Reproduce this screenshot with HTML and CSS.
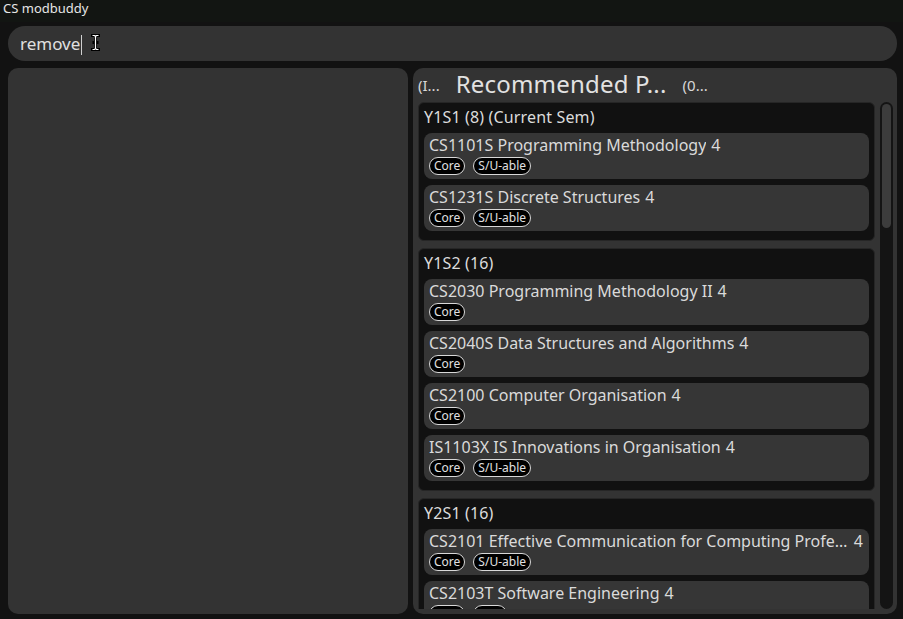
FILE: index.html
```html
<!DOCTYPE html>
<html>
<head>
<meta charset="utf-8">
<link rel="stylesheet" href="styles.css">
</head>
<body>
<div class="titlebar">CS modbuddy</div>
<div class="app">
  <div class="search">
    <span class="search-text">remove</span><span class="caret"></span>
    <svg class="ibeam" width="9" height="17" viewBox="0 0 9 17">
      <path d="M1.5 1.5h2l1 1 1-1h2M4.5 2.5v12M1.5 15.5h2l1-1 1 1h2M3 8.5h3" fill="none" stroke="#000" stroke-width="3" stroke-linecap="square"/>
      <path d="M1.5 1.5h2l1 1 1-1h2M4.5 2.5v12M1.5 15.5h2l1-1 1 1h2" fill="none" stroke="#fff" stroke-width="1.2"/>
    </svg>
  </div>
  <div class="main">
    <div class="left"></div>
    <div class="right">
      <div class="header">
        <span class="hsmall">(I...</span>
        <span class="htitle">Recommended P...</span>
        <span class="hsmall">(0...</span>
      </div>
      <div class="content">
        <div class="list">
          <div class="group">
            <div class="gtitle">Y1S1 (8) (Current Sem)</div>
            <div class="card">
              <div class="ctitle"><span class="cname">CS1101S Programming Methodology</span><span class="ccred">4</span></div>
              <div class="tags"><span class="tag">Core</span><span class="tag">S/U-able</span></div>
            </div>
            <div class="card">
              <div class="ctitle"><span class="cname">CS1231S Discrete Structures</span><span class="ccred">4</span></div>
              <div class="tags"><span class="tag">Core</span><span class="tag">S/U-able</span></div>
            </div>
          </div>
          <div class="group">
            <div class="gtitle">Y1S2 (16)</div>
            <div class="card">
              <div class="ctitle"><span class="cname">CS2030 Programming Methodology II</span><span class="ccred">4</span></div>
              <div class="tags"><span class="tag">Core</span></div>
            </div>
            <div class="card">
              <div class="ctitle"><span class="cname">CS2040S Data Structures and Algorithms</span><span class="ccred">4</span></div>
              <div class="tags"><span class="tag">Core</span></div>
            </div>
            <div class="card">
              <div class="ctitle"><span class="cname">CS2100 Computer Organisation</span><span class="ccred">4</span></div>
              <div class="tags"><span class="tag">Core</span></div>
            </div>
            <div class="card">
              <div class="ctitle"><span class="cname">IS1103X IS Innovations in Organisation</span><span class="ccred">4</span></div>
              <div class="tags"><span class="tag">Core</span><span class="tag">S/U-able</span></div>
            </div>
          </div>
          <div class="group">
            <div class="gtitle">Y2S1 (16)</div>
            <div class="card">
              <div class="ctitle"><span class="cname">CS2101 Effective Communication for Computing Professionals</span><span class="ccred">4</span></div>
              <div class="tags"><span class="tag">Core</span><span class="tag">S/U-able</span></div>
            </div>
            <div class="card">
              <div class="ctitle"><span class="cname">CS2103T Software Engineering</span><span class="ccred">4</span></div>
              <div class="tags"><span class="tag">Core</span><span class="tag">SDG</span></div>
            </div>
            <div class="card">
              <div class="ctitle"><span class="cname">CS2106 Introduction to Operating Systems</span><span class="ccred">4</span></div>
              <div class="tags"><span class="tag">Core</span></div>
            </div>
          </div>
        </div>
        <div class="scrollbar"><div class="thumb"></div></div>
      </div>
    </div>
  </div>
</div>
</body>
</html>
```

FILE: styles.css
```css
* { box-sizing: border-box; }
html, body {
  margin: 0;
  padding: 0;
  height: 619px;
  overflow: hidden;
}
body {
  background: #121212;
  color: #d8d8d8;
  font-family: "Noto Sans", "Open Sans", sans-serif;
}
.titlebar {
  height: 22px;
  line-height: 17px;
  padding-left: 3px;
  font-size: 13px;
  color: #e6e6e6;
  background: #121512;
}
.app {
  padding: 4px 6px 0 8px;
}
.search {
  height: 35px;
  border-radius: 17px;
  background: #333333;
  display: flex;
  align-items: center;
  padding-left: 12px;
}
.search-text {
  font-size: 17px;
  color: #e0e0e0;
  line-height: 20px;
  margin-top: 1px;
}
.caret {
  width: 1px;
  height: 20px;
  background: #d0d0d0;
  margin-left: 1px;
  margin-top: 2px;
}
.ibeam {
  margin-left: 9px;
  margin-top: -3px;
}
.main {
  display: flex;
  gap: 5px;
  margin-top: 7px;
  height: 546px;
}
.left {
  width: 400px;
  background: #333333;
  border-radius: 10px;
}
.right {
  flex: 1;
  background: #333333;
  border-radius: 10px;
  padding: 4px 4px 5px 5px;
  display: flex;
  flex-direction: column;
}
.header {
  height: 30px;
  display: flex;
  align-items: center;
  gap: 16px;
  padding-bottom: 7px;
  white-space: nowrap;
}
.hsmall {
  font-size: 15px;
  color: #d8d8d8;
  margin-top: 2px;
}
.htitle {
  font-size: 24px;
  color: #e2e2e2;
  letter-spacing: 0.2px;
}
.content {
  flex: 1;
  display: flex;
  gap: 5px;
  min-height: 0;
}
.list {
  width: 457px;
  overflow: hidden;
  display: flex;
  flex-direction: column;
  gap: 7px;
}
.group {
  background: #111111;
  border: 1px solid #262626;
  border-radius: 6px;
  padding: 2px 5px 9px 5px;
  display: flex;
  flex-direction: column;
  gap: 6px;
  flex-shrink: 0;
}
.gtitle {
  font-size: 16px;
  line-height: 24px;
  height: 24px;
  margin-bottom: -2px;
  color: #dcdcdc;
  letter-spacing: 0.15px;
}
.card {
  background: #363636;
  border-radius: 8px;
  padding: 1px 6px 4px 5px;
  height: 46px;
  flex-shrink: 0;
}
.ctitle {
  display: flex;
  font-size: 16px;
  line-height: 22px;
  height: 22px;
  color: #dadada;
  white-space: nowrap;
}
.cname {
  overflow: hidden;
  text-overflow: ellipsis;
  min-width: 0;
}
.ccred {
  flex-shrink: 0;
  margin-left: 5px;
}
.tags {
  display: flex;
  gap: 8px;
  margin-top: 1px;
}
.tag {
  height: 18px;
  line-height: 16px;
  font-size: 12px;
  padding: 0 4px;
  border: 1px solid #d8d8d8;
  border-radius: 9px;
  background: #000;
  color: #e0e0e0;
}
.scrollbar {
  width: 13px;
  background: #141414;
  border-radius: 7px;
  padding: 2px;
}
.thumb {
  height: 124px;
  background: #3c3c3c;
  border-radius: 5px;
}
```
